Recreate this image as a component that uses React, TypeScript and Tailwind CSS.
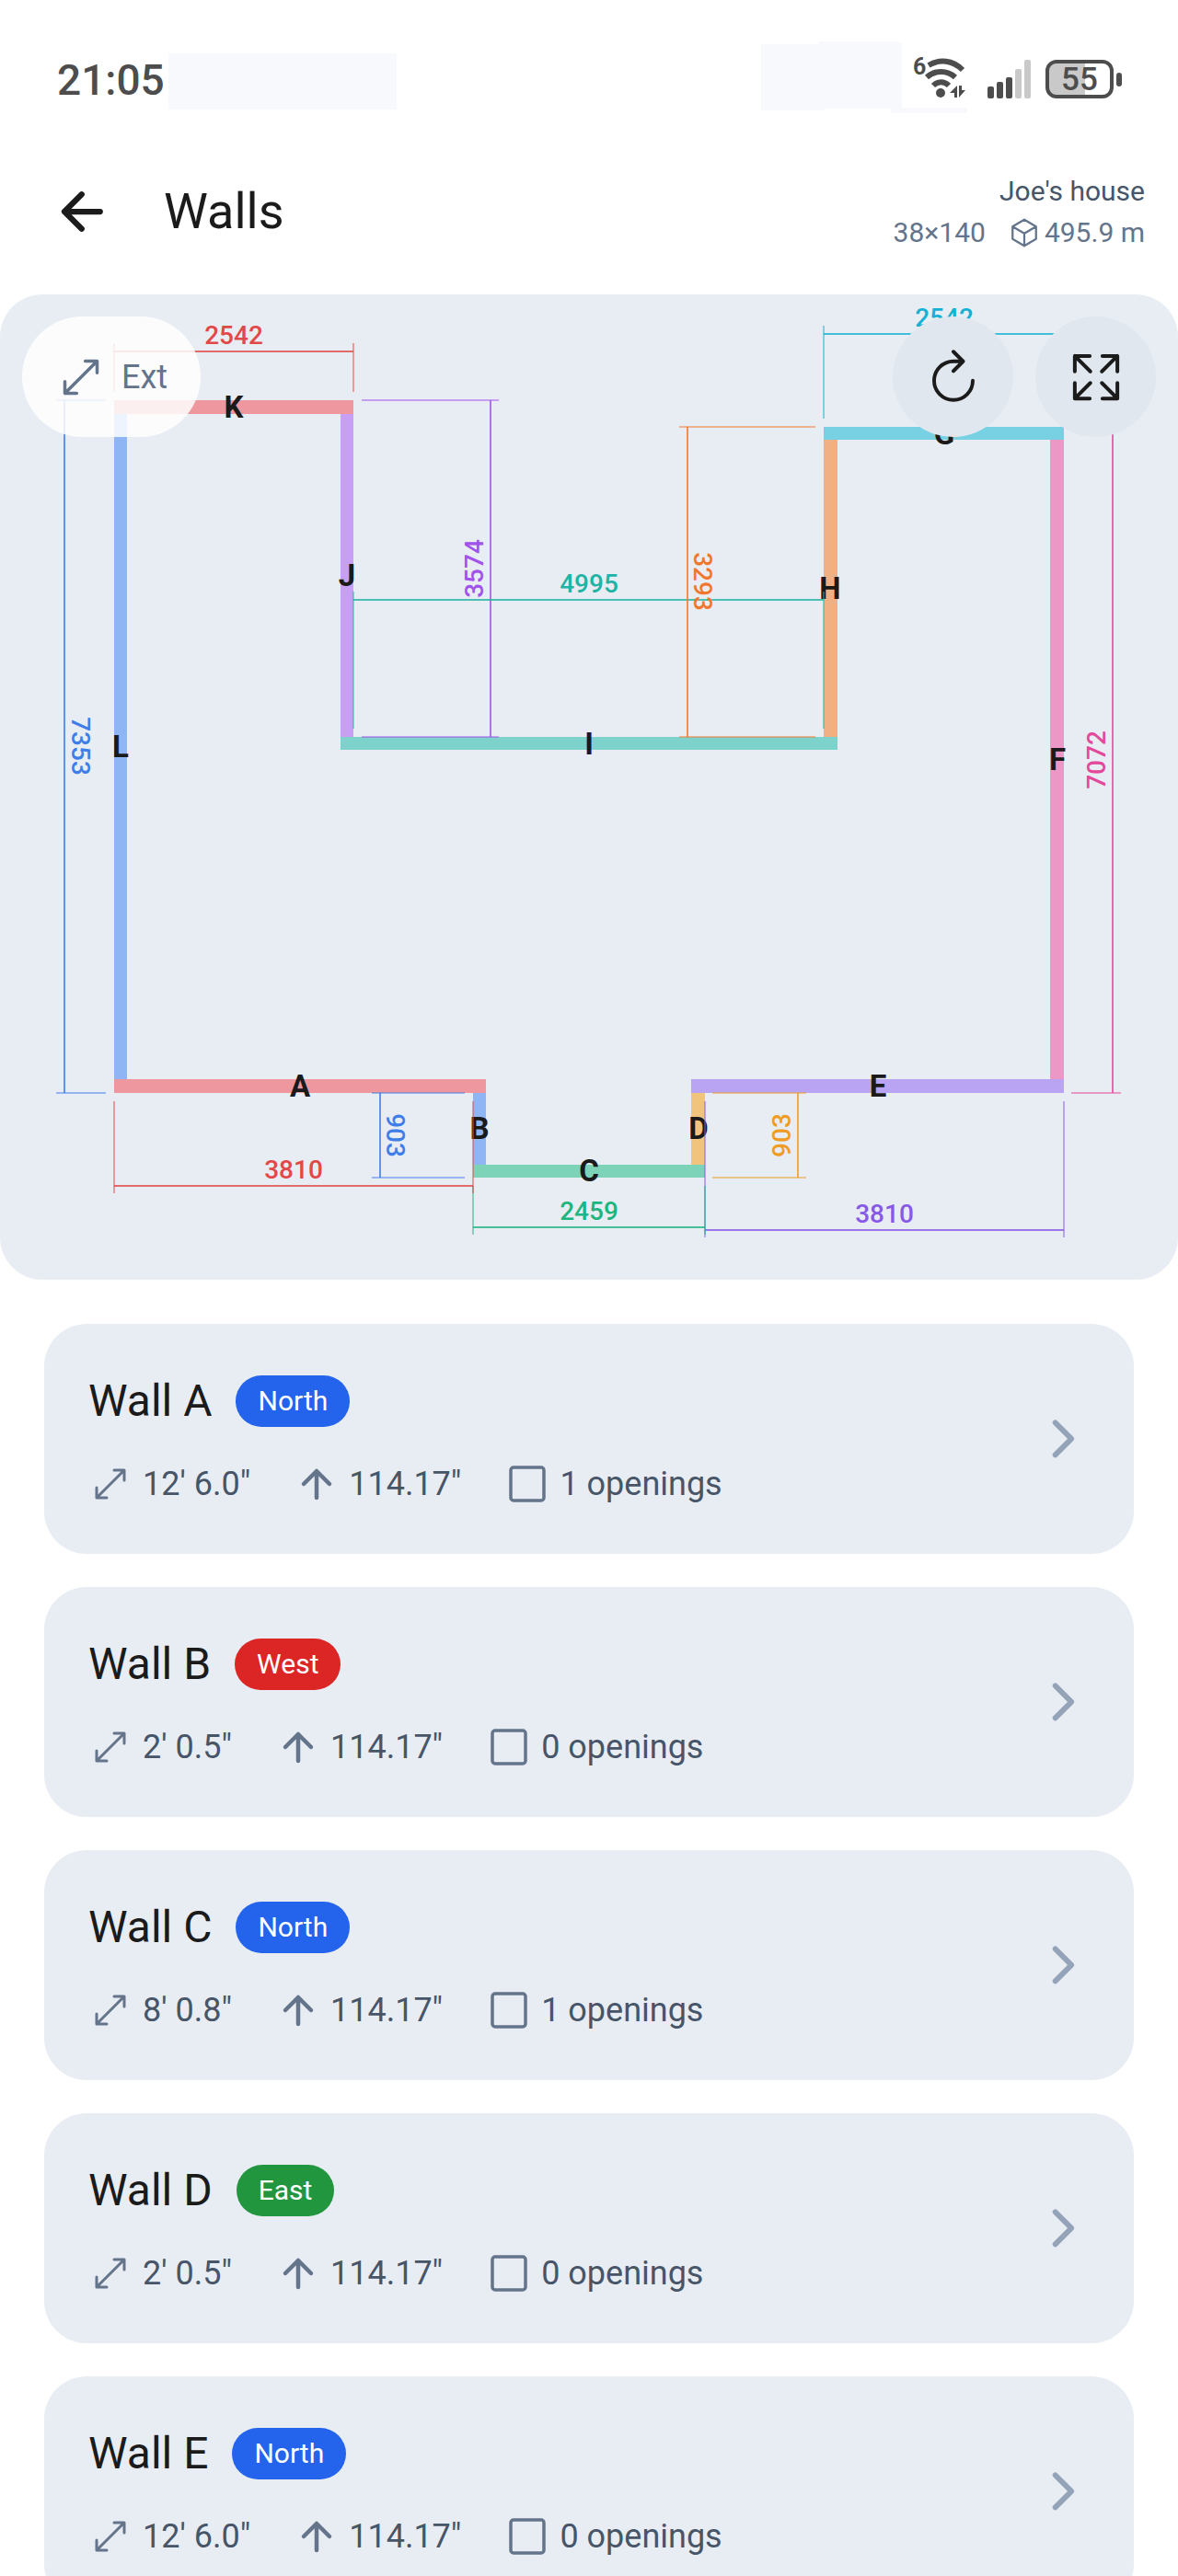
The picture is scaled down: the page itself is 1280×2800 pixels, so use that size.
import type { ReactNode } from "react";

type Wall = {
  id: string;
  facing: "North" | "West" | "East";
  length: string;
  height: string;
  openings: number;
};

const walls: Wall[] = [
  { id: "A", facing: "North", length: "12' 6.0\"", height: "114.17\"", openings: 1 },
  { id: "B", facing: "West", length: "2' 0.5\"", height: "114.17\"", openings: 0 },
  { id: "C", facing: "North", length: "8' 0.8\"", height: "114.17\"", openings: 1 },
  { id: "D", facing: "East", length: "2' 0.5\"", height: "114.17\"", openings: 0 },
  { id: "E", facing: "North", length: "12' 6.0\"", height: "114.17\"", openings: 0 },
];

const badgeColors = {
  North: "bg-[#2463eb]",
  West: "bg-[#dc2525]",
  East: "bg-[#22953f]",
};

// x, y, w, h of each wall and the spot of its letter (baseline)
const segments = [
  { id: "L", x: 124, y: 130, w: 14, h: 723, color: "#90b5f5", tx: 131, ty: 503 },
  { id: "J", x: 370, y: 130, w: 14, h: 351, color: "#c79ff4", tx: 377, ty: 317 },
  { id: "K", x: 124, y: 115, w: 260, h: 15, color: "#ee979e", tx: 254, ty: 134 },
  { id: "I", x: 370, y: 481, w: 540, h: 14, color: "#7dd3cb", tx: 640, ty: 500 },
  { id: "H", x: 895, y: 158, w: 15, h: 323, color: "#f1b083", tx: 902, ty: 331 },
  { id: "G", x: 895, y: 144, w: 261, h: 14, color: "#78d0e3", tx: 1026, ty: 163 },
  { id: "F", x: 1141, y: 158, w: 15, h: 695, color: "#ec98c6", tx: 1149, ty: 517 },
  { id: "E", x: 751, y: 853, w: 405, h: 15, color: "#b8a4f2", tx: 954, ty: 872 },
  { id: "D", x: 751, y: 868, w: 15, h: 78, color: "#f1c47e", tx: 759, ty: 918 },
  { id: "C", x: 514, y: 946, w: 252, h: 14, color: "#7cd3b8", tx: 640, ty: 964 },
  { id: "B", x: 514, y: 868, w: 14, h: 78, color: "#90b5f5", tx: 521, ty: 918 },
  { id: "A", x: 124, y: 853, w: 404, h: 15, color: "#ee979e", tx: 326, ty: 872 },
];

// line: dimension line, ticks: extension lines at both of its ends
const dimensions = [
  { id: "K", label: "2542", color: "#e14848", line: "M124 62H384", ticks: "M124 53V106M384 53V106", tx: 254, ty: 54, turn: 0 },
  { id: "L", label: "7353", color: "#3f7ee8", line: "M70 115V868", ticks: "M61 115H115M61 868H115", tx: 78, ty: 491, turn: 90 },
  { id: "J", label: "3574", color: "#a152ea", line: "M533 115V481", ticks: "M393 115H542M393 481H542", tx: 525, ty: 298, turn: -90 },
  { id: "I", label: "4995", color: "#22b3a4", line: "M384 332H895", ticks: "M384 323V472M895 323V472", tx: 640, ty: 324, turn: 0 },
  { id: "H", label: "3293", color: "#f0772d", line: "M747 144V481", ticks: "M738 144H886M738 481H886", tx: 754, ty: 312, turn: 90 },
  { id: "G", label: "2542", color: "#15b1d4", line: "M895 43H1156", ticks: "M895 34V135M1156 34V135", tx: 1026, ty: 35, turn: 0 },
  { id: "F", label: "7072", color: "#e3499a", line: "M1209 144V868", ticks: "M1164 144H1218M1164 868H1218", tx: 1201, ty: 506, turn: -90 },
  { id: "E", label: "3810", color: "#8659e8", line: "M766 1017H1156", ticks: "M766 877V1025M1156 877V1025", tx: 961, ty: 1009, turn: 0 },
  { id: "D", label: "903", color: "#ee9c24", line: "M867 868V960", ticks: "M774 868H876M774 960H876", tx: 859, ty: 914, turn: -90 },
  { id: "C", label: "2459", color: "#1db580", line: "M514 1014H766", ticks: "M514 969V1022M766 969V1022", tx: 640, ty: 1006, turn: 0 },
  { id: "B", label: "903", color: "#3f7ee8", line: "M413 868V960", ticks: "M404 868H505M404 960H505", tx: 420, ty: 914, turn: 90 },
  { id: "A", label: "3810", color: "#e14848", line: "M124 969H514", ticks: "M124 877V977M514 877V977", tx: 319, ty: 961, turn: 0 },
];

function Icon({ className, width, children }: { className: string; width: number; children: ReactNode }) {
  return (
    <svg
      viewBox="0 0 48 48"
      className={className}
      fill="none"
      stroke="currentColor"
      strokeWidth={width}
      strokeLinecap="round"
      strokeLinejoin="round"
      aria-hidden="true"
    >
      {children}
    </svg>
  );
}

function LengthIcon({ className }: { className: string }) {
  return (
    <Icon className={className} width={3}>
      <path d="M9 39 39 9M28 9H39V20M9 28V39H20" />
    </Icon>
  );
}

function StatusBar() {
  return (
    <div className="flex h-[152px] items-start justify-between pt-[45px] pr-[61px] pl-[62px] text-[#4d4d4d]">
      <div className="flex items-start gap-1 pt-[13px]">
        <span className="text-[46px] leading-[58px] font-medium">21:05</span>
        <span className="h-[61px] w-[248px] bg-[#f8f9fc]" />
      </div>
      <svg viewBox="0 0 392 80" className="h-20 w-[392px]" role="img" aria-label="Wi-Fi, signal, battery 55">
        <path d="M0 3H63V0H148V2H153V72H224V78H141V73H69V75H0Z" fill="#f8f9fc" />
        <text x="165" y="36" fontSize="25" fontWeight="700" fill="currentColor">6</text>
        <g fill="none" stroke="currentColor" strokeWidth="6">
          <path d="M182 26C194 19 208 20 219 31" />
          <path d="M180 39C189 31 202 31 211 39" />
          <path d="M187 48C192 43 199 43 204 48" />
        </g>
        <circle cx="195" cy="56" r="5" fill="currentColor" />
        <path d="M213 48V61H210V56H205ZM215 48H218V53H222L215 61Z" fill="currentColor" />
        <g fill="currentColor">
          <rect x="246" y="49" width="7" height="13" rx="2" />
          <rect x="256" y="44" width="7" height="18" rx="2" />
          <rect x="266" y="39" width="7" height="23" rx="2" />
          <rect x="276" y="30" width="7" height="32" rx="2" opacity="0.3" />
          <rect x="286" y="20" width="7" height="42" rx="2" opacity="0.3" />
          <path d="M321 22H352V60H321Q312 60 312 51V31Q312 22 321 22Z" opacity="0.3" />
          <rect x="386" y="34" width="6" height="15" rx="3" />
        </g>
        <rect x="311" y="22" width="70" height="38" rx="10" fill="none" stroke="currentColor" strokeWidth="4" />
        <text x="346" y="53" textAnchor="middle" fontSize="35" fontWeight="500" fill="currentColor">55</text>
      </svg>
    </div>
  );
}

function Header() {
  return (
    <header className="flex h-[168px] items-center justify-between pr-9 pb-3 pl-[60px]">
      <div className="flex items-center gap-[58px]">
        <button type="button" aria-label="Back" className="text-[#1b1b1b]">
          <Icon className="size-[60px]" width={5}>
            <path d="M39 24H8M23 9 8 24 23 39" />
          </Icon>
        </button>
        <h1 className="text-[54px] leading-[60px] text-[#1b1b1b]">Walls</h1>
      </div>
      <div className="text-right text-[30px] leading-[45px] text-[#64748b]">
        <div className="text-[#475569]">Joe's house</div>
        <div className="flex items-center justify-end gap-6">
          <span>38×140</span>
          <span className="flex items-center gap-1">
            <Icon className="size-9" width={3}>
              <path d="M24 5 41 15V33L24 43 7 33V15ZM7 15 24 25 41 15M24 25V43" />
            </Icon>
            495.9 m
          </span>
        </div>
      </div>
    </header>
  );
}

function FloorPlan() {
  return (
    <section className="relative overflow-hidden rounded-[46px] bg-[#e8edf4]">
      <svg viewBox="0 0 1280 1071" className="block w-full" role="img" aria-label="Floor plan">
        {segments.map((s) => (
          <rect key={s.id} x={s.x} y={s.y} width={s.w} height={s.h} fill={s.color} />
        ))}
        {segments.map((s) => (
          <text key={s.id} x={s.tx} y={s.ty} textAnchor="middle" fontSize="33" fontWeight="700" fill="#1a1a1a">
            {s.id}
          </text>
        ))}
        {dimensions.map((d) => (
          <g key={d.id} stroke={d.color} fill="none">
            <path d={d.ticks} strokeWidth="2" opacity="0.5" />
            <path d={d.line} strokeWidth="2" opacity="0.8" />
            <text
              transform={`translate(${d.tx} ${d.ty}) rotate(${d.turn})`}
              textAnchor="middle"
              fontSize="28"
              fontWeight="500"
              fill={d.color}
              stroke="none"
            >
              {d.label}
            </text>
          </g>
        ))}
      </svg>
      <div className="absolute inset-x-6 top-6 flex items-start justify-between">
        <button
          type="button"
          className="flex h-[131px] items-center gap-4 rounded-full bg-white/85 px-9 text-[36px] text-[#64748b]"
        >
          <LengthIcon className="size-14" />
          Ext
        </button>
        <div className="flex gap-6 text-[#1b1b1b]">
          <button
            type="button"
            aria-label="Rotate"
            className="flex size-[131px] items-center justify-center rounded-full bg-[#e0e7ef]"
          >
            <Icon className="size-[72px]" width={2.6}>
              <path d="M31 12.5H24A14 14 0 1 0 38 26.5M24 5.5 31 12.5 24 19.5" />
            </Icon>
          </button>
          <button
            type="button"
            aria-label="Full screen"
            className="flex size-[131px] items-center justify-center rounded-full bg-[#e0e7ef]"
          >
            <Icon className="size-[60px]" width={3.2}>
              <path d="M5.5 19V5.5H18.5M5.5 5.5 19 19M29.5 5.5H42.5V19M42.5 5.5 29 19M5.5 29V42.5H18.5M5.5 42.5 19 29M42.5 29V42.5H29.5M42.5 42.5 29 29" />
            </Icon>
          </button>
        </div>
      </div>
    </section>
  );
}

function WallCard({ wall }: { wall: Wall }) {
  return (
    <li>
      <a
        href={`#wall-${wall.id}`}
        className="flex items-center justify-between rounded-[46px] bg-[#e8edf4] px-12 pt-[54px] pb-[52px]"
      >
        <div>
          <div className="flex items-center gap-[26px]">
            <h2 className="text-[48px] leading-[60px] text-[#1b1b1b]">Wall {wall.id}</h2>
            <span className={`rounded-full px-6 text-[30px] leading-14 text-white ${badgeColors[wall.facing]}`}>
              {wall.facing}
            </span>
          </div>
          <div className="mt-9 flex items-center gap-12 text-[36px] leading-12 text-[#475569]">
            <span className="flex items-center gap-[11px]">
              <LengthIcon className="size-12 text-[#64748b]" />
              {wall.length}
            </span>
            <span className="flex items-center gap-[11px]">
              <Icon className="size-12 text-[#64748b]" width={4.5}>
                <path d="M24 39V10M10 24 24 10 38 24" />
              </Icon>
              {wall.height}
            </span>
            <span className="flex items-center gap-[11px]">
              <Icon className="size-12 text-[#64748b]" width={3.5}>
                <rect x="6" y="6" width="36" height="36" rx="3" />
              </Icon>
              {wall.openings} openings
            </span>
          </div>
        </div>
        <Icon className="size-14 text-[#94a3b8]" width={5}>
          <path d="M16 8 31 23 16 38" />
        </Icon>
      </a>
    </li>
  );
}

export default function App() {
  return (
    <div className="min-h-screen bg-white font-[Roboto,sans-serif]">
      <StatusBar />
      <Header />
      <main>
        <FloorPlan />
        <ul className="flex flex-col gap-9 px-12 pt-12">
          {walls.map((wall) => (
            <WallCard key={wall.id} wall={wall} />
          ))}
        </ul>
      </main>
    </div>
  );
}
